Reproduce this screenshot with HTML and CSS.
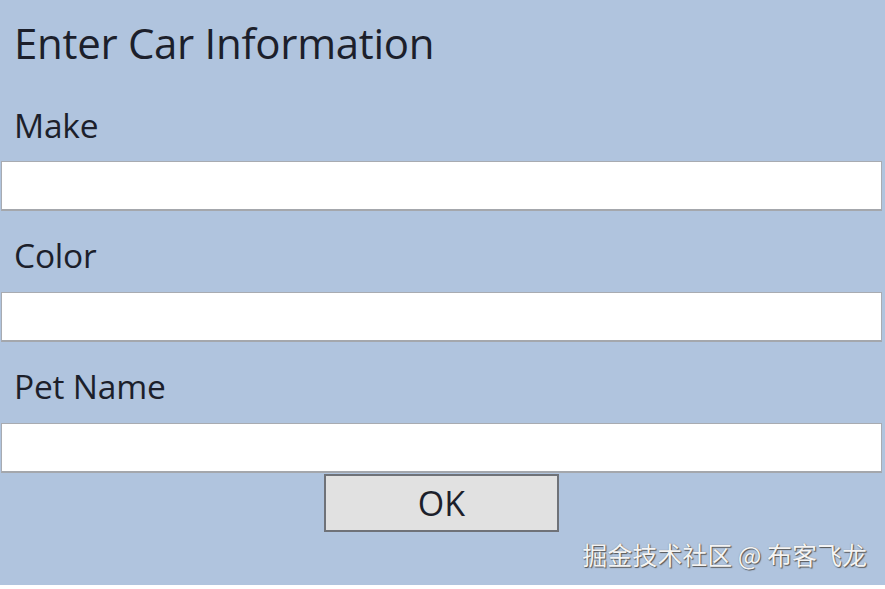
FILE: index.html
```html
<!DOCTYPE html>
<html lang="en">
<head>
  <meta charset="UTF-8">
  <title>Enter Car Information</title>
  <link rel="stylesheet" href="styles.css">
</head>
<body>
  <!-- Finestra del form -->
  <div class="window">
    <h1 class="title">Enter Car Information</h1>

    <label class="field-label" for="make">Make</label>
    <input class="field" id="make" type="text">

    <label class="field-label" for="color">Color</label>
    <input class="field" id="color" type="text">

    <label class="field-label" for="petname">Pet Name</label>
    <input class="field" id="petname" type="text">

    <div class="actions">
      <button class="ok-btn" type="button">OK</button>
    </div>

    <div class="watermark">掘金技术社区 @ 布客飞龙</div>
  </div>
</body>
</html>
```

FILE: styles.css
```css
* {
  margin: 0;
  padding: 0;
  box-sizing: border-box;
}
body {
  background: #fff;
  font-family: 'Open Sans', 'Noto Sans', sans-serif;
  color: #1c1f2b;
}

/* Area principale azzurra */
.window {
  background: #b0c4de;
  height: 585px;
  display: flex;
  flex-direction: column;
}

.title {
  font-weight: 400;
  font-size: 42px;
  line-height: 50px;
  padding: 18px 0 0 14px;
  letter-spacing: -0.3px;
}

.field-label {
  display: block;
  font-size: 33.5px;
  line-height: 40px;
  padding-left: 14px;
  letter-spacing: -0.2px;
}
.title + .field-label {
  margin-top: 37px;
  margin-bottom: 16px;
}
.field + .field-label {
  margin-top: 24px;
  margin-bottom: 17px;
}

.field {
  display: block;
  height: 50px;
  margin: 0 3px 0 1px;
  background: #fff;
  border: 1px solid #a8abb1;
  border-bottom: 2px solid #a4a7ac;
  font-family: inherit;
  font-size: 28px;
  outline: none;
}

.actions {
  display: flex;
  justify-content: center;
  padding: 1px 3px 0 1px;
}
.ok-btn {
  width: 235px;
  height: 58px;
  background: #e1e1e1;
  border: 2px solid #6f7278;
  font-family: inherit;
  font-size: 34px;
  color: #1c1f2b;
}

.watermark {
  margin-top: auto;
  margin-bottom: 16px;
  align-self: flex-end;
  margin-right: 18px;
  font-family: 'Noto Sans CJK SC', sans-serif;
  font-size: 25px;
  line-height: 30px;
  color: #f4f4f4;
  text-shadow: 1px 1px 1px #555, 0 0 1px #777;
}
```
